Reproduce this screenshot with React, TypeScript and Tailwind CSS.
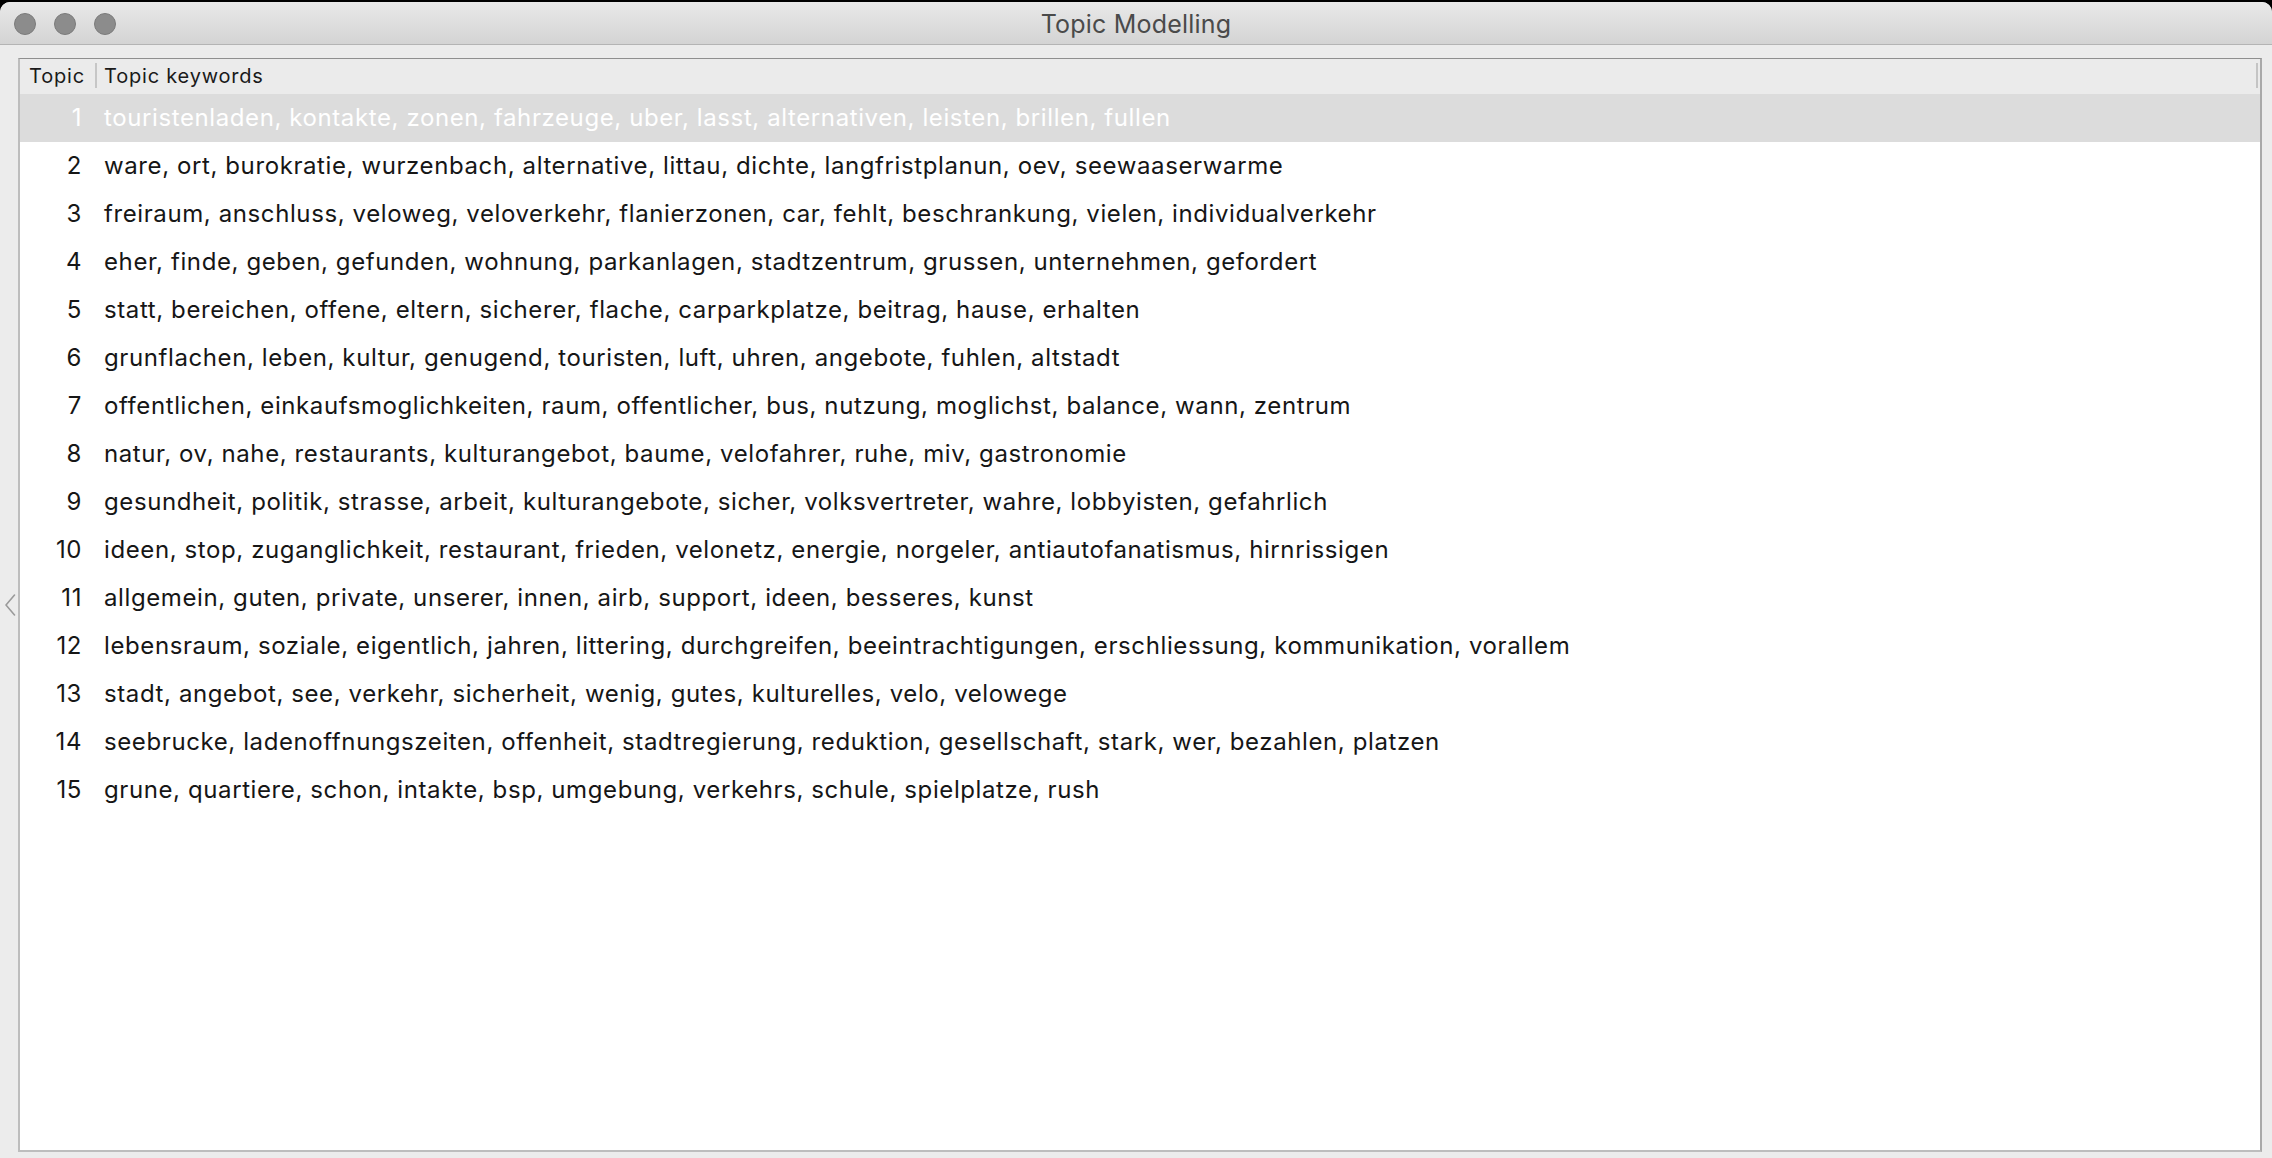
const topics: string[] = [
    "touristenladen, kontakte, zonen, fahrzeuge, uber, lasst, alternativen, leisten, brillen, fullen",
    "ware, ort, burokratie, wurzenbach, alternative, littau, dichte, langfristplanun, oev, seewaaserwarme",
    "freiraum, anschluss, veloweg, veloverkehr, flanierzonen, car, fehlt, beschrankung, vielen, individualverkehr",
    "eher, finde, geben, gefunden, wohnung, parkanlagen, stadtzentrum, grussen, unternehmen, gefordert",
    "statt, bereichen, offene, eltern, sicherer, flache, carparkplatze, beitrag, hause, erhalten",
    "grunflachen, leben, kultur, genugend, touristen, luft, uhren, angebote, fuhlen, altstadt",
    "offentlichen, einkaufsmoglichkeiten, raum, offentlicher, bus, nutzung, moglichst, balance, wann, zentrum",
    "natur, ov, nahe, restaurants, kulturangebot, baume, velofahrer, ruhe, miv, gastronomie",
    "gesundheit, politik, strasse, arbeit, kulturangebote, sicher, volksvertreter, wahre, lobbyisten, gefahrlich",
    "ideen, stop, zuganglichkeit, restaurant, frieden, velonetz, energie, norgeler, antiautofanatismus, hirnrissigen",
    "allgemein, guten, private, unserer, innen, airb, support, ideen, besseres, kunst",
    "lebensraum, soziale, eigentlich, jahren, littering, durchgreifen, beeintrachtigungen, erschliessung, kommunikation, vorallem",
    "stadt, angebot, see, verkehr, sicherheit, wenig, gutes, kulturelles, velo, velowege",
    "seebrucke, ladenoffnungszeiten, offenheit, stadtregierung, reduktion, gesellschaft, stark, wer, bezahlen, platzen",
    "grune, quartiere, schon, intakte, bsp, umgebung, verkehrs, schule, spielplatze, rush",
];

function TrafficLight() {
    return (
        <div className="w-[22px] h-[22px] rounded-full bg-[#8c8c8c] border border-[#7b7b7b]" />
    );
}

export default function App() {
    return (
        <div
            className="w-[2272px] h-[1158px] bg-black pt-[2px] overflow-hidden"
            style={{ fontFamily: "Inter, 'Liberation Sans', sans-serif" }}
        >
            <div className="w-full h-full flex flex-col bg-[#ececec] rounded-t-[10px] overflow-hidden">

                {/* title bar */}
                <div className="relative h-[43px] shrink-0 flex items-center bg-gradient-to-b from-[#e9e9e9] to-[#d4d4d4] border-b border-[#b4b4b4]">
                    <div className="flex items-center gap-[18px] pl-[14px] pt-[1px]">
                        <TrafficLight />
                        <TrafficLight />
                        <TrafficLight />
                    </div>
                    <div className="absolute inset-0 flex items-center justify-center pt-[3px] text-[25px] text-[#4a4a4a] tracking-[0.2px]">
                        Topic Modelling
                    </div>
                </div>

                {/* content */}
                <div className="flex-1 flex pt-[13px] pb-[6px]">
                    <div className="w-[18px] shrink-0 flex items-center pl-[4px]">
                        <svg width="12" height="22" viewBox="0 0 12 22" fill="none">
                            <polyline points="10.5,1 2,11 10.5,21" stroke="#9a9a9a" strokeWidth="1.6" strokeLinecap="round" strokeLinejoin="round" />
                        </svg>
                    </div>

                    <div className="w-[2244px] flex flex-col bg-white border-t border-t-[#8f8f8f] border-l-2 border-l-[#bdbdbd] border-r-2 border-r-[#a9a9a9] border-b-2 border-b-[#bdbdbd]">
                        {/* header */}
                        <div className="h-[35px] shrink-0 flex items-center bg-[#ebebeb] text-[20px] text-[#1a1a1a] tracking-[0.8px] pb-[2px]">
                            <div className="w-[75px] pl-[9px] leading-none">Topic</div>
                            <div className="w-[2px] h-[25px] bg-[#c6c6c6]" />
                            <div className="flex-1 pl-[7px] leading-none">Topic keywords</div>
                            <div className="w-[2px] h-[25px] bg-[#c4c4c4] mr-[2px]" />
                        </div>

                        {/* rows */}
                        <div className="flex flex-col">
                            {topics.map((keywords, i) => (
                                <div
                                    key={i}
                                    className={
                                        i === 0
                                            ? "h-[48px] flex items-center bg-[#dcdcdc] text-white text-[24px] tracking-[0.6px]"
                                            : "h-[48px] flex items-center text-[#161616] text-[24px] tracking-[0.6px]"
                                    }
                                >
                                    <div className="w-[62px] text-right">{i + 1}</div>
                                    <div className="pl-[22px] whitespace-nowrap">{keywords}</div>
                                </div>
                            ))}
                        </div>
                    </div>
                </div>

            </div>
        </div>
    );
}
